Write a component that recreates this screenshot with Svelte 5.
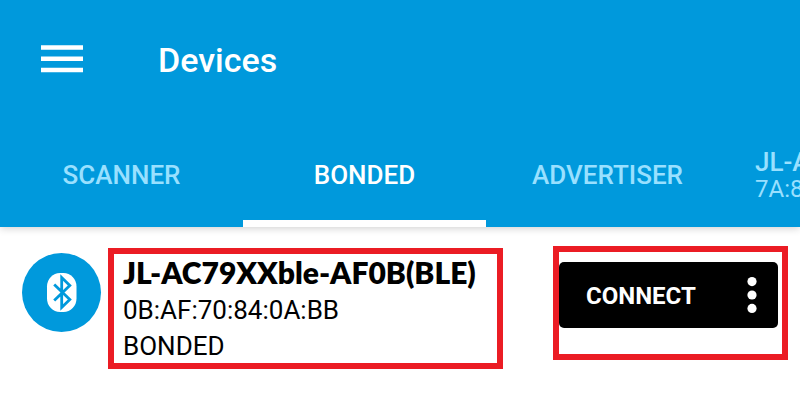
<script>
  const tabs = [
    { label: 'SCANNER' },
    { label: 'BONDED', active: true },
    { label: 'ADVERTISER' },
    { label: 'JL-A', address: '7A:8' }
  ];
</script>

<header>
  <div class="toolbar">
    <button class="menu" aria-label="Open menu">
      <svg width="42" height="30" viewBox="0 0 42 30" aria-hidden="true">
        <path d="M0 2.5h42M0 13.7h42M0 25h42" stroke="#fff" stroke-width="4.6" />
      </svg>
    </button>
    <h1>Devices</h1>
  </div>
  <nav>
    {#each tabs as tab}
      <button class="tab" class:active={tab.active} class:device={tab.address}>
        <span>{tab.label}</span>
        {#if tab.address}<small>{tab.address}</small>{/if}
      </button>
    {/each}
  </nav>
</header>

<main>
  <svg class="avatar" width="80" height="80" viewBox="0 0 80 80" role="img" aria-label="Bluetooth device">
    <circle cx="39.5" cy="39.5" r="39.5" fill="#0099dc" />
    <rect x="25" y="20" width="29.5" height="39" rx="13" ry="13.5" fill="#fff" />
    <path d="M32.2 31.6l15.6 15-8.1 7.8V24.6l8.1 7.8L32.2 47.4" fill="none" stroke="#0099dc" stroke-width="2.8" />
  </svg>
  <section class="info">
    <h2>JL-AC79XXble-AF0B(BLE)</h2>
    <p>0B:AF:70:84:0A:BB</p>
    <p>BONDED</p>
  </section>
  <section class="actions">
    <div class="bar">
      <button class="connect">CONNECT</button>
      <button class="more" aria-label="More options">
        <svg width="10" height="36" viewBox="0 0 10 36" fill="#fff" aria-hidden="true">
          <circle cx="5" cy="4.6" r="4.6" />
          <circle cx="5" cy="18" r="4.6" />
          <circle cx="5" cy="31.4" r="4.6" />
        </svg>
      </button>
    </div>
  </section>
</main>

<style>
  :global(body) {
    margin: 0;
    background: #fff;
    font-family: Roboto, sans-serif;
    overflow-x: hidden;
  }
  button {
    border: 0;
    padding: 0;
    background: none;
    font: inherit;
    color: inherit;
    cursor: pointer;
  }
  svg {
    display: block;
  }
  h1, h2, p {
    margin: 0;
  }
  header {
    background: #0099dc;
    color: #fff;
    box-shadow: 0 1px 8px rgba(0, 0, 0, 0.2);
    overflow: hidden;
    clip-path: inset(0 0 -12px 0);
  }
  .toolbar {
    display: flex;
    align-items: center;
    gap: 75px;
    height: 120px;
    padding-left: 41px;
  }
  h1 {
    font-size: 34px;
    line-height: 40px;
    font-weight: 500;
  }
  nav {
    display: flex;
  }
  .tab {
    flex: 0 0 243px;
    display: flex;
    flex-direction: column;
    justify-content: center;
    align-items: center;
    height: 107px;
    box-sizing: border-box;
    border-top: 9px solid transparent;
    border-bottom: 7px solid transparent;
    font-size: 26px;
    line-height: 28px;
    font-weight: 500;
    color: #99e0ff;
  }
  .tab.active {
    color: #fff;
    border-bottom-color: #fff;
  }
  .tab.device {
    align-items: flex-start;
    padding-left: 26px;
  }
  small {
    font-size: 24px;
    line-height: 26px;
    font-weight: 400;
  }
  main {
    display: flex;
    align-items: flex-start;
    padding: 19px 12px 0 22px;
  }
  .avatar {
    flex: none;
    margin-top: 7px;
  }
  .info {
    flex: none;
    display: flex;
    flex-direction: column;
    gap: 3px;
    margin: 2px 16px 0 6px;
    box-sizing: border-box;
    width: 395px;
    border: 6px solid #eb1c24;
    padding: 0 9px;
    color: #000;
  }
  h2 {
    font-family: Lato, sans-serif;
    font-size: 30px;
    line-height: 37px;
    font-weight: 800;
    white-space: nowrap;
  }
  p {
    font-size: 26px;
    line-height: 33px;
  }
  .actions {
    flex: none;
    box-sizing: border-box;
    width: 235px;
    margin-left: auto;
    border: 6px solid #eb1c24;
    padding: 10px 4px 26px 0;
  }
  .bar {
    display: flex;
    align-items: center;
    justify-content: space-between;
    height: 66px;
    padding: 0 21px 0 27px;
    border-radius: 5px;
    background: #000;
    color: #fff;
  }
  .connect {
    padding-top: 2px;
    font-size: 24px;
    line-height: 64px;
    font-weight: 700;
  }
</style>
